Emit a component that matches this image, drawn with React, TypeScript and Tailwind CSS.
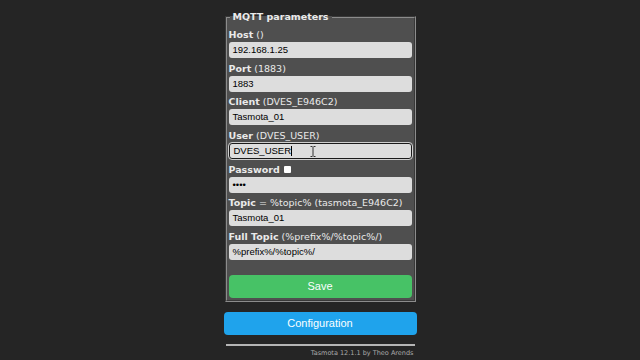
import React from 'react';

const fields = [
  { label: 'Host', hint: '()', value: '192.168.1.25' },
  { label: 'Port', hint: '(1883)', value: '1883' },
  { label: 'Client', hint: '(DVES_E946C2)', value: 'Tasmota_01' },
  { label: 'User', hint: '(DVES_USER)', value: 'DVES_USER', focused: true },
  { label: 'Password', hint: '', value: '••••', checkbox: true },
  { label: 'Topic', hint: '= %topic% (tasmota_E946C2)', value: 'Tasmota_01' },
  { label: 'Full Topic', hint: '(%prefix%/%topic%/)', value: '%prefix%/%topic%/' },
];

function Field({ label, hint, value, focused, checkbox }: { label: string; hint: string; value: string; focused?: boolean; checkbox?: boolean }) {
  return (
    <div className="flex flex-col">
      <div className="flex items-center h-[12px] text-[9.5px] leading-[12px] text-[#eaeaea] font-['DejaVu_Sans',sans-serif] whitespace-nowrap">
        <b>{label}</b>
        {hint && <span>&nbsp;{hint}</span>}
        {checkbox && <span className="ml-[4px] w-[7px] h-[7px] bg-white rounded-[1px]"></span>}
      </div>
      <div
        className={`mt-[1px] h-[16px] rounded-[3px] bg-[#dddddd] flex items-center px-[4px] text-[9.5px] text-black font-['Liberation_Sans',sans-serif] relative ${
          focused ? 'border border-[#1a1a1a] outline outline-1 outline-[#cfcfcf]' : ''
        }`}
      >
        <span>{value}</span>
        {focused && (
          <>
            <span className="w-[1px] h-[10px] bg-black"></span>
            <svg className="absolute left-[80px] top-[2px]" width="6" height="11" viewBox="0 0 6 11">
              <path d="M0.5 0.5h2M3.5 0.5h2M3 1v9M0.5 10.5h2M3.5 10.5h2" stroke="#333" strokeWidth="1" fill="none" />
            </svg>
          </>
        )}
      </div>
    </div>
  );
}

export default function App() {
  return (
    <div className="w-[640px] h-[360px] bg-[#252525] overflow-hidden">
      <div className="w-[193px] mx-auto pt-[11px] flex flex-col">
        <fieldset className="mx-[1px] border-2 [border-style:groove] border-[#8c8c8c] bg-[#4f4f4f] px-[2px] pb-[2px] pt-[6px]">
          <legend className="px-[3px] ml-[1px] text-[9.5px] leading-[12px] font-bold text-[#eaeaea] font-['DejaVu_Sans',sans-serif]">
            MQTT parameters
          </legend>
          <div className="flex flex-col gap-[4.7px]">
            {fields.map((f) => (
              <Field key={f.label} {...f} />
            ))}
          </div>
          <button className="mt-[15px] w-full h-[23px] rounded-[4px] bg-[#47c266] text-[#faffff] text-[11px] font-['Liberation_Sans',sans-serif]">
            Save
          </button>
        </fieldset>
        <button className="mt-[10px] w-full h-[23px] rounded-[4px] bg-[#1fa3ec] text-[#faffff] text-[11px] font-['Liberation_Sans',sans-serif]">
          Configuration
        </button>
        <div className="mt-[9px] mx-[2px] h-[2px] bg-[#b5b5b5]"></div>
        <div className="mt-[3px] pr-[3px] text-right text-[6.5px] leading-[8px] text-[#aaaaaa] font-['DejaVu_Sans',sans-serif]">
          Tasmota 12.1.1 by Theo Arends
        </div>
      </div>
    </div>
  );
}
